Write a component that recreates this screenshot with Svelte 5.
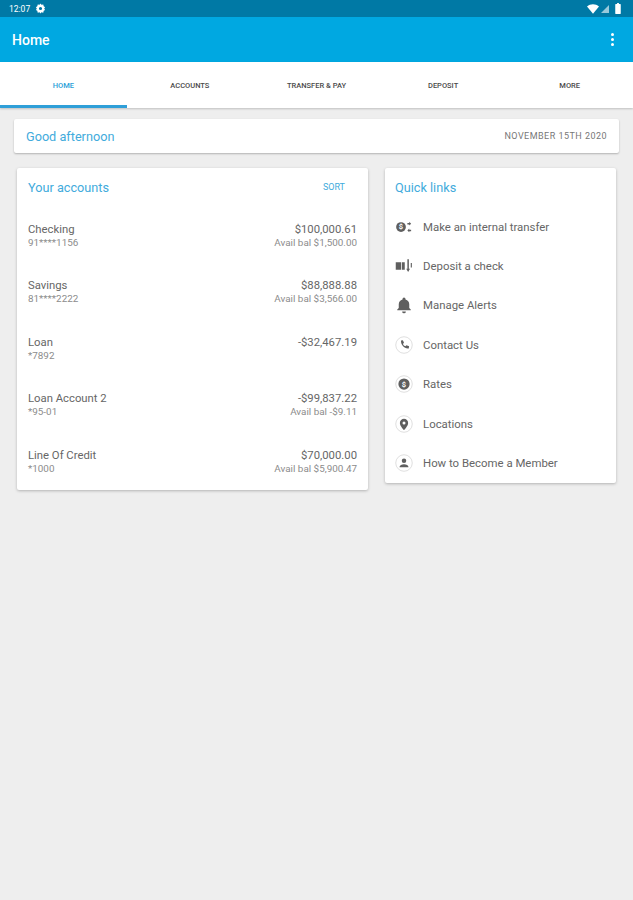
<script>
  const tabs = ["HOME", "ACCOUNTS", "TRANSFER & PAY", "DEPOSIT", "MORE"];

  const accounts = [
    { name: "Checking", num: "91****1156", amount: "$100,000.61", avail: "Avail bal $1,500.00" },
    { name: "Savings", num: "81****2222", amount: "$88,888.88", avail: "Avail bal $3,566.00" },
    { name: "Loan", num: "*7892", amount: "-$32,467.19", avail: "" },
    { name: "Loan Account 2", num: "*95-01", amount: "-$99,837.22", avail: "Avail bal -$9.11" },
    { name: "Line Of Credit", num: "*1000", amount: "$70,000.00", avail: "Avail bal $5,900.47" }
  ];

  const links = [
    { label: "Make an internal transfer", icon: "transfer" },
    { label: "Deposit a check", icon: "check" },
    { label: "Manage Alerts", icon: "bell" },
    { label: "Contact Us", icon: "phone" },
    { label: "Rates", icon: "rates" },
    { label: "Locations", icon: "pin" },
    { label: "How to Become a Member", icon: "member" }
  ];
</script>

<div class="page">
  <div class="status">
    <span class="time">12:07</span>
    <svg class="gear" viewBox="0 0 24 24" width="11" height="11">
      <path fill="#fff" fill-rule="evenodd" d="M12 1l2 3 4-1 1 4 3 2-2 3 2 3-3 2-1 4-4-1-2 3-2-3-4 1-1-4-3-2 2-3-2-3 3-2 1-4 4 1zM12 8.500a3.500 3.500 0 1 0 0 7 3.500 3.500 0 0 0 0-7z" />
    </svg>
    <span class="spacer"></span>
    <svg viewBox="0 0 14 11" width="12" height="10">
      <path fill="#fff" d="M0 2.500C4-1 10-1 14 2.500L7 11z" />
    </svg>
    <svg class="signal" viewBox="0 0 10 10" width="8" height="8">
      <path fill="#fff" opacity="0.6" d="M0 10L10 0v10z" />
    </svg>
    <svg class="battery" viewBox="0 0 6 12" width="6" height="11">
      <path fill="#fff" d="M2 0h2v1h1.500a.5.500 0 0 1 .5.500V11.500a.5.500 0 0 1-.5.500H.5a.5.500 0 0 1-.5-.500V1.500A.5.500 0 0 1 .5 1H2z" />
    </svg>
  </div>

  <header class="appbar">
    <h1>Home</h1>
    <div class="dots"><i></i><i></i><i></i></div>
  </header>

  <nav class="tabs">
    {#each tabs as tab, i}
      <div class="tab" class:active={i === 0}>{tab}</div>
    {/each}
  </nav>

  <main class="content">
    <section class="greeting">
      <span class="hello">Good afternoon</span>
      <span class="date">NOVEMBER 15TH 2020</span>
    </section>

    <div class="columns">
      <section class="card accounts">
        <div class="card-head">
          <h2>Your accounts</h2>
          <span class="sort">SORT</span>
        </div>
        {#each accounts as a}
          <div class="account">
            <div>
              <div class="primary">{a.name}</div>
              <div class="secondary">{a.num}</div>
            </div>
            <div class="right">
              <div class="primary">{a.amount}</div>
              <div class="secondary">{a.avail}</div>
            </div>
          </div>
        {/each}
      </section>

      <section class="card links">
        <h2>Quick links</h2>
        {#each links as l}
          <div class="link">
            <svg class="icon" viewBox="0 0 24 24" width="18" height="18">
              {#if l.icon === "transfer"}
                <circle cx="8" cy="12" r="6.500" fill="#5f5f5f" />
                <text x="8" y="15" class="glyph">$</text>
                <path fill="#5f5f5f" d="M16.500 6.500h2.500V5l2.500 2.500-2.500 2.500V8.500h-2.500zM21.500 15.500H19V14l-2.500 2.500L19 19v-1.500h2.500z" />
              {:else if l.icon === "check"}
                <path fill="#5f5f5f" d="M1 7h7v10H1zM9 7h4v10H9z" />
                <path fill="#5f5f5f" d="M16.500 3h2v13h-2zM15 15.500h5l-2.500 4.500zM21 8h1.500v6H21z" />
              {:else if l.icon === "bell"}
                <path fill="#5f5f5f" d="M12 2a2 2 0 0 1 2 2v.600A7 7 0 0 1 19 11v5l2 2v1H3v-1l2-2v-5a7 7 0 0 1 5-6.400V4a2 2 0 0 1 2-2zM9.500 20.500h5a2.500 2.500 0 0 1-5 0z" />
              {:else}
                <circle cx="12" cy="12" r="11" fill="#fff" stroke="#d4d4d4" stroke-width="1" />
                {#if l.icon === "phone"}
                  <path fill="#5f5f5f" d="M8 6l2.500-.500 1.500 3.500-1.500 1.500c.7 1.500 1.800 2.600 3.300 3.300L15.300 12.300l3.500 1.500-.500 2.700c-5.500.800-10.800-4.500-10.300-10.500z" />
                {:else if l.icon === "rates"}
                  <circle cx="12" cy="12" r="7.500" fill="#5f5f5f" />
                  <text x="12" y="15.500" class="glyph">$</text>
                {:else if l.icon === "pin"}
                  <path fill="#5f5f5f" fill-rule="evenodd" d="M12 5a5.500 5.500 0 0 1 5.500 5.500C17.500 14.500 12 20 12 20s-5.500-5.500-5.500-9.500A5.500 5.500 0 0 1 12 5zm0 3.500a2 2 0 1 0 0 4 2 2 0 0 0 0-4z" />
                {:else}
                  <circle cx="12" cy="9" r="3" fill="#5f5f5f" />
                  <path fill="#5f5f5f" d="M6 17.500c0-2.500 3-4 6-4s6 1.500 6 4z" />
                {/if}
              {/if}
            </svg>
            <span>{l.label}</span>
          </div>
        {/each}
      </section>
    </div>
  </main>
</div>

<style>
  :global(body) {
    margin: 0;
    background: #eeeeee;
  }
  .page {
    width: 633px;
    min-height: 900px;
    background: #eeeeee;
    font-family: Roboto, "Liberation Sans", sans-serif;
    color: #6a6a6a;
  }
  .status {
    height: 17px;
    background: #0079a5;
    display: flex;
    align-items: center;
    gap: 3px;
    padding: 0 12px 0 9px;
    color: #fff;
  }
  .time {
    font-size: 8.500px;
    margin-right: 2px;
  }
  .spacer {
    flex: 1;
  }
  .signal {
    margin-left: -1px;
  }
  .battery {
    margin-left: 3px;
  }
  .appbar {
    height: 45px;
    background: #00a8e1;
    display: flex;
    align-items: center;
    justify-content: space-between;
    padding: 0 19px 0 12px;
  }
  h1 {
    margin: 0;
    font-size: 14px;
    font-weight: 500;
    color: #fff;
  }
  .dots {
    display: flex;
    flex-direction: column;
    gap: 2px;
  }
  .dots i {
    width: 3px;
    height: 3px;
    border-radius: 50%;
    background: #fff;
  }
  .tabs {
    height: 46px;
    background: #fff;
    display: grid;
    grid-template-columns: repeat(5, 1fr);
    box-shadow: 0 1px 2px rgba(0, 0, 0, 0.2);
  }
  .tab {
    display: flex;
    align-items: center;
    justify-content: center;
    font-size: 7.500px;
    font-weight: 500;
    color: #4a4a4a;
  }
  .tab.active {
    color: #2a9fd8;
    border-bottom: 3px solid #2f9fd8;
    padding-top: 3px;
    box-sizing: border-box;
  }
  .content {
    padding: 11px 14px 0;
  }
  .greeting {
    height: 34px;
    background: #fff;
    border-radius: 2px;
    box-shadow: 0 1px 2px rgba(0, 0, 0, 0.25);
    display: flex;
    align-items: center;
    justify-content: space-between;
    padding: 0 12px;
  }
  .hello {
    font-size: 12.700px;
    color: #42abdc;
  }
  .date {
    font-size: 9px;
    letter-spacing: 0.47px;
    color: #777;
  }
  .columns {
    display: flex;
    align-items: flex-start;
    gap: 17px;
    margin-top: 15px;
    padding-left: 3px;
  }
  .card {
    background: #fff;
    border-radius: 2px;
    box-shadow: 0 1px 3px rgba(0, 0, 0, 0.25);
  }
  h2 {
    margin: 0;
    font-size: 12.700px;
    font-weight: 400;
    color: #42abdc;
  }
  .accounts {
    width: 351px;
    height: 322px;
    padding: 0 11px;
    box-sizing: border-box;
  }
  .card-head {
    display: flex;
    justify-content: space-between;
    align-items: center;
    height: 38px;
    margin-bottom: 2px;
  }
  .sort {
    font-size: 9px;
    color: #42abdc;
    margin-right: 12px;
  }
  .account {
    display: flex;
    justify-content: space-between;
    height: 56.400px;
    padding-top: 14px;
    box-sizing: border-box;
  }
  .right {
    text-align: right;
  }
  .primary {
    font-size: 11.300px;
    line-height: 15px;
    color: #666;
  }
  .secondary {
    font-size: 9.900px;
    line-height: 12.500px;
    color: #8c8c8c;
    min-height: 13px;
  }
  .links {
    width: 231px;
    height: 315px;
    padding: 0 10px;
    box-sizing: border-box;
  }
  .links h2 {
    line-height: 40px;
    margin-bottom: -1px;
  }
  .link {
    display: flex;
    align-items: center;
    gap: 10px;
    height: 39.400px;
    font-size: 11.400px;
    color: #666;
  }
  .icon {
    width: 18px;
    height: 18px;
    flex: none;
  }
  .glyph {
    font-size: 10px;
    font-weight: 700;
    fill: #fff;
    text-anchor: middle;
  }
</style>
